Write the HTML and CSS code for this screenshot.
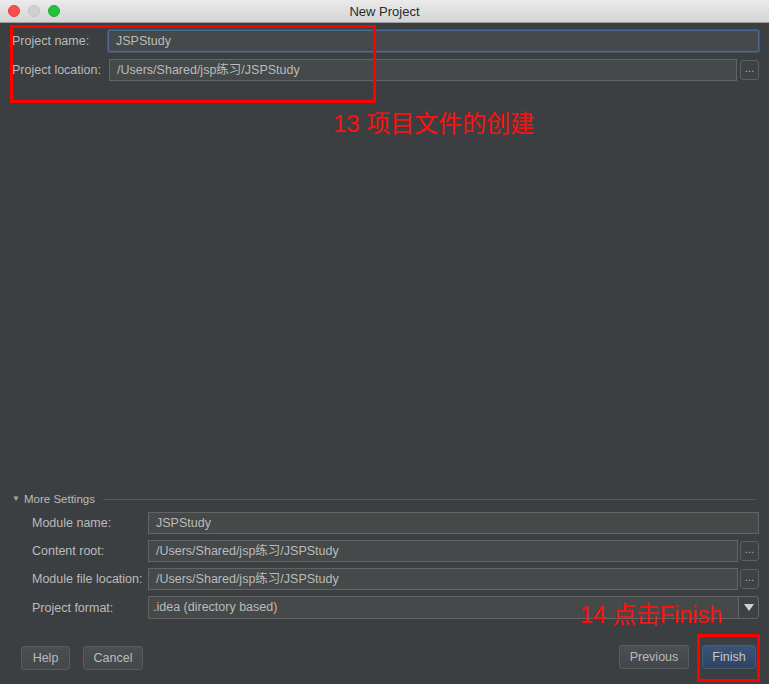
FILE: index.html
```html
<!DOCTYPE html>
<html lang="zh">
<head>
<meta charset="utf-8">
<title>New Project</title>
<link rel="stylesheet" href="styles.css">
</head>
<body>
<div class="window">
  <div class="titlebar">
    <div class="lights">
      <span class="light red"></span>
      <span class="light gray"></span>
      <span class="light green"></span>
    </div>
    <div class="title">New Project</div>
  </div>

  <div class="top-form">
    <label class="lbl">Project name:</label>
    <div class="field active wide">JSPStudy</div>
    <label class="lbl">Project location:</label>
    <div class="field loc">/Users/Shared/jsp练习/JSPStudy</div>
    <div class="browse">…</div>
  </div>

  <div class="spacer"></div>

  <div class="more">
    <div class="more-head">
      <span class="tri">▼</span>
      <span class="more-title">More Settings</span>
      <span class="more-line"></span>
    </div>
    <div class="more-form">
      <label class="lbl">Module name:</label>
      <div class="field wide">JSPStudy</div>
      <label class="lbl">Content root:</label>
      <div class="field">/Users/Shared/jsp练习/JSPStudy</div>
      <div class="browse">…</div>
      <label class="lbl">Module file location:</label>
      <div class="field">/Users/Shared/jsp练习/JSPStudy</div>
      <div class="browse">…</div>
      <label class="lbl">Project format:</label>
      <div class="combo wide">
        <span class="combo-text">.idea (directory based)</span>
        <span class="combo-arrow"><span class="arrow-tri"></span></span>
      </div>
    </div>
  </div>

  <div class="buttons">
    <div class="btn help">Help</div>
    <div class="btn cancel">Cancel</div>
    <div class="btn-spacer"></div>
    <div class="btn previous">Previous</div>
    <div class="btn finish">Finish</div>
  </div>

  <div class="mark mark-top"></div>
  <div class="note note-top">13 项目文件的创建</div>
  <div class="note note-bottom">14 点击Finish</div>
  <div class="mark mark-bottom"></div>
</div>
</body>
</html>
```

FILE: styles.css
```css
* { box-sizing: border-box; }
html, body { margin: 0; padding: 0; }
body {
  width: 769px;
  height: 684px;
  overflow: hidden;
  background: #3c3f41;
  font-family: "Liberation Sans", "Noto Sans CJK SC", sans-serif;
  font-size: 12.5px;
  color: #bbbbbb;
}
.window {
  position: relative;
  width: 769px;
  height: 684px;
  display: flex;
  flex-direction: column;
}
.titlebar {
  position: relative;
  height: 23px;
  flex: none;
  background: linear-gradient(#ebebeb, #d4d4d4);
  border-bottom: 1px solid #9f9f9f;
  display: flex;
  align-items: center;
  justify-content: center;
}
.lights {
  position: absolute;
  left: 8px;
  top: 5px;
  display: flex;
  gap: 8px;
}
.light {
  width: 12px;
  height: 12px;
  border-radius: 50%;
}
.light.red { background: #fc4f4d; border: 1px solid #e0403e; }
.light.gray { background: #d0d0d0; border: 1px solid #c4c4c4; }
.light.green { background: #22c33f; border: 1px solid #1aad33; }
.title {
  font-size: 13px;
  color: #2b2b2b;
  padding-top: 1px;
}

.top-form {
  flex: none;
  display: grid;
  grid-template-columns: 93px 1fr 19px;
  column-gap: 3px;
  row-gap: 7px;
  padding: 7px 10px 0 12px;
  align-items: center;
}
.lbl {
  white-space: nowrap;
  color: #bbbbbb;
  line-height: 22px;
}
.field {
  height: 22px;
  background: #45494a;
  border: 1px solid #646464;
  padding: 0 7px;
  line-height: 20px;
  color: #bbbbbb;
  white-space: nowrap;
  overflow: hidden;
}
.wide { grid-column: 2 / 4; }
.field.active {
  border: 1px solid #4a6d98;
  box-shadow: 0 0 0 1px rgba(74, 109, 152, 0.5);
  border-radius: 2px;
}
.field.loc { margin-left: 1px; }
.browse {
  height: 20px;
  width: 19px;
  border: 1px solid #5e6162;
  border-radius: 3px;
  background: #3f4244;
  color: #bbbbbb;
  font-size: 10px;
  text-align: center;
  line-height: 16px;
}

.spacer { flex: 1; }

.more { flex: none; padding: 0 10px 0 12px; }
.more-head {
  display: flex;
  align-items: center;
  height: 14px;
  margin-bottom: 6px;
}
.tri {
  font-size: 8px;
  color: #a9a9a9;
  width: 12px;
  line-height: 14px;
}
.more-title {
  font-size: 11.5px;
  color: #bbbbbb;
  white-space: nowrap;
}
.more-line {
  flex: 1;
  height: 1px;
  background: #555759;
  margin-left: 8px;
  margin-right: 3px;
}
.more-form {
  display: grid;
  grid-template-columns: 114px 1fr 19px;
  column-gap: 2px;
  row-gap: 6px;
  padding-left: 20px;
  align-items: center;
}
.combo {
  height: 23px;
  display: flex;
  background: #45494a;
  border: 1px solid #646464;
  border-radius: 0 3px 3px 0;
}
.combo-text {
  flex: 1;
  padding: 0 4px;
  line-height: 21px;
  white-space: nowrap;
}
.combo-arrow {
  width: 20px;
  border-left: 1px solid #646464;
  background: #3f4244;
  display: flex;
  align-items: center;
  justify-content: center;
  border-radius: 0 3px 3px 0;
}
.arrow-tri {
  width: 0;
  height: 0;
  border-left: 5px solid transparent;
  border-right: 5px solid transparent;
  border-top: 7px solid #d0d0d0;
}

.buttons {
  flex: none;
  display: flex;
  align-items: center;
  gap: 13px;
  padding: 0 13px 14px 21px;
  margin-top: 27px;
}
.btn {
  height: 24px;
  line-height: 22px;
  border: 1px solid #5a5d5f;
  border-radius: 3px;
  background: linear-gradient(#4b4f51, #43474a);
  color: #bbbbbb;
  text-align: center;
  font-size: 12.5px;
}
.btn.help { width: 49px; }
.btn.cancel { width: 60px; }
.btn-spacer { flex: 1; }
.btn.previous { width: 70px; margin-top: -2px; }
.btn.finish {
  width: 54px;
  margin-top: -2px;
  background: linear-gradient(#3a5478, #2e4563);
  border-color: #4a5b70;
  color: #c6c8ca;
}

.mark {
  position: absolute;
  border: 3px solid #ff0000;
}
.mark-top { left: 10px; top: 25px; width: 366px; height: 78px; }
.mark-bottom { left: 697px; top: 634px; width: 63px; height: 48px; }
.note {
  position: absolute;
  color: #ff1010;
  font-family: "Liberation Sans", "Noto Sans CJK SC", sans-serif;
  font-size: 24px;
  line-height: 28px;
  white-space: nowrap;
}
.note-top { left: 333px; top: 110px; }
.note-bottom { left: 580px; top: 601px; font-size: 23.5px; }
```
